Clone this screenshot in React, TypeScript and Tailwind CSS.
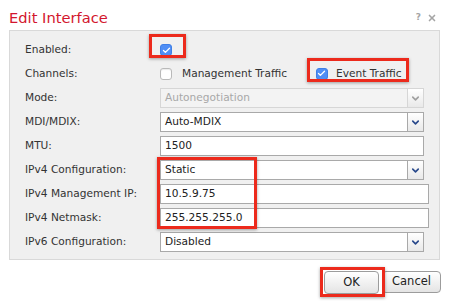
import { X, Check, ChevronDown } from "lucide-react";

const font = { fontFamily: '"DejaVu Sans", Verdana, sans-serif' };

const Checkbox = ({ checked = false }: { checked?: boolean }) =>
  checked ? (
    <span className="w-[12px] h-[12px] rounded-[3px] bg-[#4f8ef5] border border-[#3f7fe6] flex items-center justify-center">
      <Check className="w-[9px] h-[9px] text-white" strokeWidth={3.5} />
    </span>
  ) : (
    <span className="w-[12px] h-[12px] rounded-[3px] bg-white border border-[#b9b9b9] shadow-[inset_0_1px_1px_rgba(0,0,0,0.08)]" />
  );

const Select = ({ value, disabled = false }: { value: string; disabled?: boolean }) => (
  <div className="flex h-[20px]">
    <div
      className={`w-[248px] h-full border flex items-center pl-[4px] ${
        disabled ? "bg-[#f3f3f3] border-[#d6d6d6] text-[#a8a8a8]" : "bg-white border-[#a9a9a9] text-[#222]"
      }`}
    >
      {value}
    </div>
    <div
      className={`w-[16px] h-full border border-l-0 flex items-center justify-center bg-gradient-to-b from-white to-[#e9e9e9] ${
        disabled ? "border-[#d6d6d6] text-[#a0a0a0]" : "border-[#a9a9a9] text-[#2a4a8c]"
      }`}
    >
      <ChevronDown className="w-[11px] h-[11px]" strokeWidth={3.5} />
    </div>
  </div>
);

const Input = ({ value, width }: { value: string; width: string }) => (
  <div className={`${width} h-[20px] bg-white border border-[#a9a9a9] flex items-center pl-[4px] text-[#222]`}>{value}</div>
);

const Row = ({ label, children }: { label: string; children: React.ReactNode }) => (
  <div className="flex items-center h-[24px]">
    <div className="w-[135px] text-[#333]">{label}</div>
    {children}
  </div>
);

const Highlight = ({ className }: { className: string }) => (
  <div className={`absolute border-[3px] border-[#ec2a1c] shadow-[0_1px_3px_rgba(0,0,0,0.35)] pointer-events-none ${className}`} />
);

export default function App() {
  return (
    <div className="relative w-[449px] h-[301px] bg-white text-[10.6px] overflow-hidden" style={font}>
      <div className="flex items-center justify-between pl-[9px] pr-[12px] pt-[6px] h-[30px]">
        <span className="text-[14.7px] text-[#d3162e] leading-[18px]">Edit Interface</span>
        <div className="flex items-center gap-[6px] text-[#a5a5a5]">
          <span className="text-[9px] font-bold">?</span>
          <X className="w-[10px] h-[10px]" strokeWidth={4} />
        </div>
      </div>

      <div className="mx-[9px] bg-[#f0f0f0] border border-[#d9d9d9] pl-[15px] pt-[7px] pb-[5px]">
        <Row label="Enabled:">
          <Checkbox checked />
        </Row>
        <Row label="Channels:">
          <div className="flex items-center">
            <Checkbox />
            <span className="ml-[10px] text-[#333]">Management Traffic</span>
            <span className="ml-[29px]">
              <Checkbox checked />
            </span>
            <span className="ml-[8px] text-[#333]">Event Traffic</span>
          </div>
        </Row>
        <Row label="Mode:">
          <Select value="Autonegotiation" disabled />
        </Row>
        <Row label="MDI/MDIX:">
          <Select value="Auto-MDIX" />
        </Row>
        <Row label="MTU:">
          <Input value="1500" width="w-[264px]" />
        </Row>
        <Row label="IPv4 Configuration:">
          <Select value="Static" />
        </Row>
        <Row label="IPv4 Management IP:">
          <Input value="10.5.9.75" width="w-[269px]" />
        </Row>
        <Row label="IPv4 Netmask:">
          <Input value="255.255.255.0" width="w-[269px]" />
        </Row>
        <Row label="IPv6 Configuration:">
          <Select value="Disabled" />
        </Row>
      </div>

      <div className="flex justify-end gap-[3px] pr-[8px] pt-[11px]">
        <button className="w-[55px] h-[23px] rounded-[4px] border border-[#9c9c9c] bg-gradient-to-b from-white to-[#e4e4e4] text-[11.5px] text-[#222]">
          OK
        </button>
        <button className="w-[59px] h-[22px] rounded-[4px] border border-[#9c9c9c] bg-gradient-to-b from-white to-[#e4e4e4] text-[11.5px] text-[#222]">
          Cancel
        </button>
      </div>

      <Highlight className="left-[149px] top-[34px] w-[37px] h-[24px]" />
      <Highlight className="left-[307px] top-[58px] w-[102px] h-[24px]" />
      <Highlight className="left-[157px] top-[157px] w-[100px] h-[72px]" />
      <Highlight className="left-[320px] top-[267px] w-[65px] h-[30px]" />
    </div>
  );
}
